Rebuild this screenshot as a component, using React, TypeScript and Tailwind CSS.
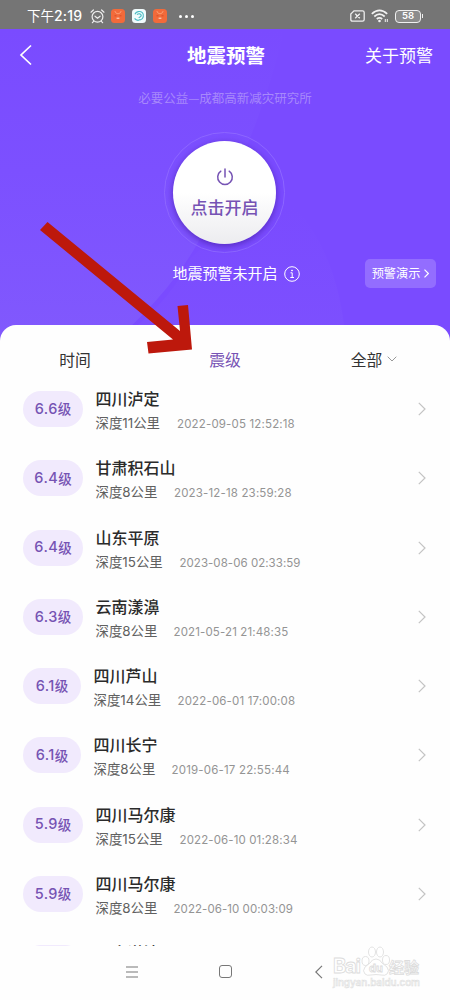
const quakes = [
  { level: '6.6', place: '四川泸定', depth: '11', time: '2022-09-05 12:52:18', pill: 'w-[60px]', gap: 'w-[81.5px]', tracking: 'tracking-[0.16px]' },
  { level: '6.4', place: '甘肃积石山', depth: '8', time: '2023-12-18 23:59:28', pill: 'w-[60px]', gap: 'w-[78.5px]', tracking: 'tracking-[0.16px]' },
  { level: '6.4', place: '山东平原', depth: '15', time: '2023-08-06 02:33:59', pill: 'w-[60px]', gap: 'w-[84px]', tracking: 'tracking-[0.04px]' },
  { level: '6.3', place: '云南漾濞', depth: '8', time: '2021-05-21 21:48:35', pill: 'w-[60px]', gap: 'w-[78px]', tracking: 'tracking-[0.14px]' },
  { level: '6.1', place: '四川芦山', depth: '14', time: '2022-06-01 17:00:08', pill: 'w-[58px]', gap: 'w-[84px]', tracking: 'tracking-[0.16px]' },
  { level: '6.1', place: '四川长宁', depth: '8', time: '2019-06-17 22:55:44', pill: 'w-[58px]', gap: 'w-[78px]', tracking: 'tracking-[0.18px]' },
  { level: '5.9', place: '四川马尔康', depth: '15', time: '2022-06-10 01:28:34', pill: 'w-[60px]', gap: 'w-[84px]', tracking: 'tracking-[0.12px]' },
  { level: '5.9', place: '四川马尔康', depth: '8', time: '2022-06-10 00:03:09', pill: 'w-[60px]', gap: 'w-[78px]', tracking: 'tracking-[0.06px]' },
];

const digits = "font-[Inter,'Noto_Sans_CJK_SC',sans-serif]";

function StatusBar() {
  return (
    <div className="flex h-[29px] shrink-0 items-center bg-[#757575] pl-[27px] pr-[27px] pt-[3px] text-white">
      <span className="flex w-[56px] items-center text-[13.5px] leading-none whitespace-nowrap">
        下午<span className="font-[Inter] text-[14px] font-medium tracking-[0.2px]">2:19</span>
      </span>
      <svg className="ml-[7px]" width="15" height="15" viewBox="0 0 15 15" fill="none" stroke="#eee" strokeWidth="1.2" strokeLinecap="round">
        <circle cx="7.5" cy="7.8" r="5.4" />
        <path d="M1 3.2 3.4 1M14 3.2 11.6 1M5 7.2l2.5 2 2.6-2M3.6 12.4l-1.2 1.3M11.4 12.4l1.2 1.3" />
      </svg>
      <div className="ml-[6px] flex gap-[7px]">
        <AppBadge />
        <svg width="14" height="14" viewBox="0 0 14 14" fill="none">
          <rect width="14" height="14" rx="3.5" fill="#f1fbfc" />
          <path d="M3 5.2C4 2.5 8 1.6 10.3 3.6c2.2 2.2 1 6.6-2 7.2M5 5.6c1.6-1.4 4-1 4.2.8.2 1.6-1.6 1.4-2.4 2.4M2.6 9.4c1.2 2 3.8 2.4 5.6 1.2" stroke="#4cbcc4" strokeWidth="1.2" />
        </svg>
        <AppBadge />
      </div>
      <div className="ml-[12px] flex gap-[3px]">
        <i className="size-[3px] rounded-full bg-white" />
        <i className="size-[3px] rounded-full bg-white" />
        <i className="size-[3px] rounded-full bg-white" />
      </div>
      <div className="ml-auto flex items-center">
        <svg width="15" height="12" viewBox="0 0 15 12" fill="none" stroke="#eee" strokeWidth="1.3">
          <path d="M4 .8h8.5q1.7 0 1.7 1.7v7q0 1.7-1.7 1.7h-10Q.8 11.2.8 9.5V4zM5.2 3.7l4.6 4.6M9.8 3.7 5.2 8.3" />
        </svg>
        <svg className="ml-[6px]" width="18" height="14" viewBox="0 0 18 14" fill="none" stroke="#f2f2f2" strokeWidth="1.7">
          <path d="M.8 4.8q7.7-7 15.4 0M3.3 7.5q5.2-4.6 10.4 0M5.8 10q2.7-2.3 5.4 0" />
          <circle cx="8.5" cy="12" r="1.3" fill="#f2f2f2" stroke="none" />
          <path d="M14.3 10v3M16.3 10v3" strokeWidth="1" />
        </svg>
        <div className="ml-[6px] flex h-[13px] w-[26px] items-center justify-center rounded-[4px] border-[1.5px] border-[#f0f0f0] bg-[#8c8c8c] font-[Inter] text-[9.5px] leading-none font-semibold">
          58
        </div>
        <i className="ml-px h-[4px] w-px bg-[#eee]" />
      </div>
    </div>
  );
}

function AppBadge() {
  return (
    <svg width="14" height="14" viewBox="0 0 14 14" fill="none">
      <rect width="14" height="14" rx="3.5" fill="#f26a3a" />
      <path d="M3.8 2q.8 2.8 3.2 2.8T10.2 2" stroke="#fa9a70" strokeWidth="1" />
      <path d="M3.5 6.8h2M8.5 6.8h2" stroke="#d94e28" strokeWidth="1" />
      <path d="M5.6 9.2h2.8" stroke="#ffe5d8" strokeWidth="1" />
    </svg>
  );
}

function Chevron({ className }: { className: string }) {
  return (
    <svg className={className} viewBox="0 0 8 14" fill="none" stroke="currentColor" strokeWidth="1.2">
      <path d="m.8.8 6.2 6.2-6.2 6.2" vectorEffect="non-scaling-stroke" />
    </svg>
  );
}

function Hero() {
  return (
    <div className="relative h-[316px] shrink-0 bg-[#7a4bff] text-white">
      <svg className="absolute inset-0" width="450" height="316" viewBox="0 0 450 316">
        <defs>
          <linearGradient id="wave" x1="0" y1="0" x2="0" y2="1">
            <stop offset="0" stopColor="#7a4bff" />
            <stop offset=".45" stopColor="#7c50ff" />
            <stop offset="1" stopColor="#8159fd" />
          </linearGradient>
          <linearGradient id="hill" x1="0" y1="0" x2="0" y2="1">
            <stop offset="0" stopColor="#7a4bff" />
            <stop offset="1" stopColor="#7d50fe" />
          </linearGradient>
        </defs>
        <path d="M0 0h285q-30 120-85 210-30 55-90 106H0z" fill="url(#wave)" />
        <path d="M110 316q56-35 80-86 50-50 105-52 45 50 51 138z" fill="url(#hill)" />
      </svg>
      <div className="relative flex h-full flex-col items-center">
        <div className="grid h-[51px] w-full grid-cols-3 items-center pr-[17px] pl-[19px]">
          <svg width="14" height="22" viewBox="0 0 14 22" fill="none" stroke="#fff" strokeWidth="1.7">
            <path d="M12 1.5 2 11l10 9.5" />
          </svg>
          <h1 className="text-center text-[19.5px] leading-none font-bold whitespace-nowrap">地震预警</h1>
          <span className="text-right text-[17px] leading-none">关于预警</span>
        </div>
        <p className="mt-[10px] text-[12.5px] leading-[15px] text-[#a788fb]">必要公益—成都高新减灾研究所</p>
        <div className="mt-[27px] mr-px flex size-[121px] shrink-0 items-center justify-center rounded-full border border-[#8d66ff]">
          <div className="flex size-[103px] flex-col items-center rounded-full bg-linear-to-b from-white from-50% to-[#ececef] text-[#7653b4] shadow-[0_2px_6px_rgba(60,20,150,0.6)]">
            <svg className="mt-[27px]" width="18" height="18" viewBox="0 0 18 18" fill="none" stroke="currentColor" strokeWidth="1.5" strokeLinecap="round">
              <path d="M9 1v8M4.8 3.2a7.3 7.3 0 1 0 8.4 0" />
            </svg>
            <span className="mt-[12px] text-[17px] leading-[17px] font-medium">点击开启</span>
          </div>
        </div>
        <div className="mt-[6px] grid w-full grid-cols-[1fr_auto_1fr] items-center pr-[14px] pl-[36px]">
          <span />
          <div className="flex items-center gap-[6px] text-[15px] leading-none">
            <span className="-mt-[2px]">地震预警未开启</span>
            <svg width="16" height="16" viewBox="0 0 16 16" fill="none" stroke="#fff" strokeWidth="1">
              <circle cx="8" cy="8" r="7.3" />
              <path d="M6.5 6.8h1.7v4.7M6.3 11.5h3.7" />
              <circle cx="8" cy="4.5" r=".5" fill="#fff" />
            </svg>
          </div>
          <div className="flex h-[29px] w-[71px] items-center justify-center gap-[4px] justify-self-end rounded-[5px] bg-[#936dff] text-[12.2px] leading-none whitespace-nowrap">
            预警演示
            <Chevron className="h-[9px] w-[5px]" />
          </div>
        </div>
      </div>
    </div>
  );
}

function Watermark() {
  return (
    <svg className="absolute top-[944px] left-[331px]" width="95" height="48" viewBox="0 0 95 48" fill="#fff" stroke="#dcdcdc" strokeWidth=".8">
      <g fontFamily="Inter, sans-serif" fontWeight="700">
        <text x="2" y="29" fontSize="20" textLength="28">Bai</text>
        <ellipse cx="34.5" cy="17" rx="3.5" ry="4.5" />
        <ellipse cx="41" cy="8" rx="3.5" ry="5" />
        <ellipse cx="49" cy="8" rx="3.5" ry="5" />
        <ellipse cx="55" cy="16" rx="3.5" ry="4.5" />
        <path d="M45 15q4 0 6 4l5 4q3 4 0 7-2 2-6 1-5-1-10 0-4 1-6-1-3-3 0-7l5-4q2-4 6-4z" />
        <text x="38" y="28" fontSize="11">du</text>
      </g>
      <text x="58" y="28.5" fontSize="15" fontWeight="700" fontFamily="Noto Sans CJK SC, sans-serif">经验</text>
      <text x="2" y="42" fontSize="10" textLength="87" fontFamily="Inter, sans-serif" fontWeight="500" fill="#fafafa" strokeWidth=".5">jingyan.baidu.com</text>
    </svg>
  );
}

export default function App() {
  return (
    <div className="relative flex h-[1000px] w-[450px] flex-col overflow-hidden bg-[#fefefe] font-['Noto_Sans_CJK_SC',sans-serif]">
      <StatusBar />
      <Hero />
      <div className="relative -mt-5 h-[621px] shrink-0 overflow-hidden rounded-t-[16px] bg-[#fefefe]">
        <div className="grid h-[50px] grid-cols-3 items-center pt-[19px] text-[15.8px] leading-none text-[#333]">
          <span className="text-center">时间</span>
          <span className="text-center text-[#7854b5]">震级</span>
          <span className="flex items-center justify-center gap-[5px] pr-[2px]">
            全部
            <svg width="10" height="6" viewBox="0 0 10 6" fill="none" stroke="#999" strokeWidth="1">
              <path d="m.7.7 4.3 4.3 4.3-4.3" />
            </svg>
          </span>
        </div>
        {quakes.map((item, i) => (
          <div key={i} className="flex h-[69.25px] items-start pr-[24px] pl-[23px]">
            <div className={`mt-[16px] flex h-[36px] items-center justify-center rounded-full bg-[#f1eafd] text-[13.5px] leading-none font-medium text-[#7653b3] ${item.pill}`}>
              <span className={`${digits} text-[14.5px] tracking-[0.4px]`}>{item.level}</span>级
            </div>
            <div className="ml-[12.5px] pt-[15px]">
              <h2 className="text-[16px] leading-[17px] font-medium text-[#2b2b2b]">{item.place}</h2>
              <div className="mt-[7px] flex items-center leading-[15px]">
                <span className={`shrink-0 text-[13.4px] whitespace-nowrap text-[#606060] ${item.gap}`}>
                  深度<span className={digits}>{item.depth}</span>公里
                </span>
                <span className={`${digits} pt-[3px] text-[11.5px] whitespace-nowrap text-[#949494] ${item.tracking}`}>{item.time}</span>
              </div>
            </div>
            <Chevron className="mt-[27px] ml-auto h-[14px] w-[8px] text-[#c4c4c4]" />
          </div>
        ))}
        {/* next row, only its top edge is above the nav bar */}
        <div className="flex items-start pl-[23px]">
          <div className="mt-[16px] h-[36px] w-[60px] rounded-full bg-[#f1eafd]" />
          <h2 className="mt-[15px] ml-[12.5px] text-[16px] leading-[17px] font-medium text-[#2b2b2b]">云南漾濞</h2>
        </div>
      </div>
      <div className="flex h-[51px] items-center pl-[125px] text-[#777]">
        <svg width="14" height="12" viewBox="0 0 14 12" stroke="currentColor" strokeWidth="1.1">
          <path d="M1 1h12M1 6h12M1 11h12" />
        </svg>
        <div className="ml-[80px] size-[13px] rounded-[3px] border-[1.2px] border-[#777]" />
        <svg className="ml-[83px]" width="8" height="14" viewBox="0 0 8 14" fill="none" stroke="currentColor" strokeWidth="1.2">
          <path d="M7 .8.8 7 7 13.2" />
        </svg>
      </div>
      <Watermark />
      <svg className="absolute top-[220px] left-[35px]" width="165" height="140" viewBox="0 0 165 140" fill="#bd180c">
        <path d="M12.5 2 145 111l-2.5-25 10.5-1 4 44.5-43.5 4L112 122l26-2.5L5 10z" />
      </svg>
    </div>
  );
}
